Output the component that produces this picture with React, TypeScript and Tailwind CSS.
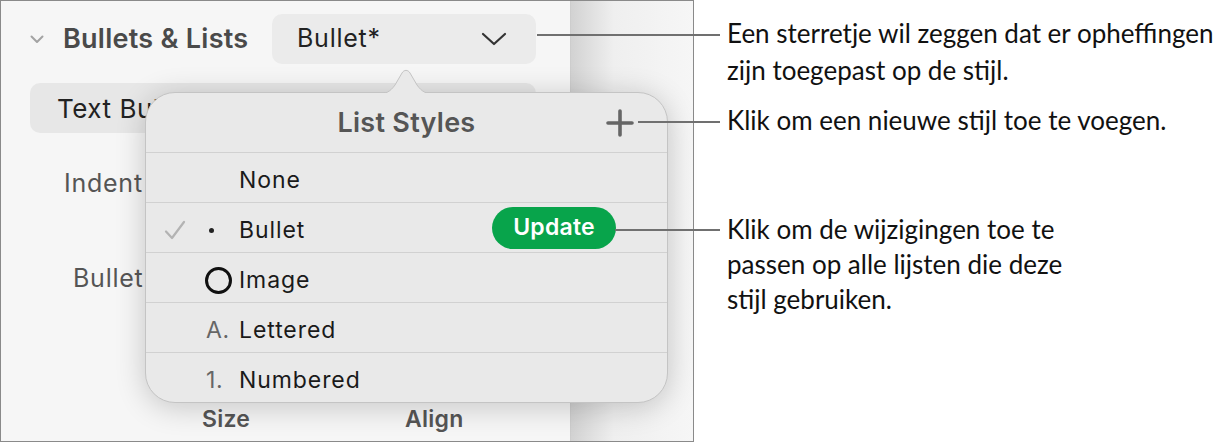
const ui = { fontFamily: 'Inter, "Liberation Sans", sans-serif' };
const note = { fontFamily: 'Lato, "Open Sans", sans-serif' };

const Check = () => (
  <svg width="24" height="24" viewBox="0 0 24 24" className="shrink-0">
    <path d="M3 13.5 L9 20 L21 4" fill="none" stroke="#b3b3b3" strokeWidth="2.2" strokeLinecap="round" strokeLinejoin="round" />
  </svg>
);

const rows = [
  { label: 'None', mark: null, checked: false },
  { label: 'Bullet', mark: 'dot', checked: true },
  { label: 'Image', mark: 'ring', checked: false },
  { label: 'Lettered', mark: 'A.', checked: false },
  { label: 'Numbered', mark: '1.', checked: false },
];

const ListStylesPopover = () => (
  <div className="absolute left-[145px] top-[92px] w-[523px] h-[311px] rounded-[30px] bg-[#e9e9e9] border border-[#c4c4c4] shadow-[0_4px_30px_rgba(0,0,0,0.2)]">
    {/* arrow */}
    <svg width="60" height="26" viewBox="0 0 60 26" className="absolute left-[230px] top-[-25px]">
      <path d="M0 26 C10 26 14 24 19 17 L26 5 C28 1.5 32 1.5 34 5 L41 17 C46 24 50 26 60 26" fill="#e9e9e9" stroke="#c4c4c4" strokeWidth="1" />
      <rect x="0" y="25" width="60" height="2" fill="#e9e9e9" />
    </svg>
    <div className="relative h-[60px] flex items-center justify-center border-b border-[#d1d1d1]">
      <span className="pt-[2px] text-[27px] font-semibold tracking-[0.01em] text-[#555555]">List Styles</span>
      <svg width="28" height="28" viewBox="0 0 28 28" className="absolute left-[460px] top-[16px]">
        <path d="M14 2 V26 M2 14 H26" stroke="#666666" strokeWidth="3.6" strokeLinecap="round" />
      </svg>
    </div>
    {rows.map((r, i) => (
      <div
        key={r.label}
        className={`h-[50px] pt-[5px] flex items-center ${i < rows.length - 1 ? 'border-b border-[#d1d1d1]' : ''}`}
      >
        <div className="w-[58px] pl-[17px] flex items-center">{r.checked && <Check />}</div>
        <div className="w-[35px] flex items-center">
          {r.mark === 'dot' && <span className="ml-[5px] w-[5px] h-[5px] rounded-full bg-[#222222]" />}
          {r.mark === 'ring' && <span className="ml-[1px] w-[27px] h-[27px] rounded-full border-[3.5px] border-[#111111]" />}
          {(r.mark === 'A.' || r.mark === '1.') && (
            <span className="ml-[2px] text-[23px] tracking-[0.03em] text-[#666666]">{r.mark}</span>
          )}
        </div>
        <span className="text-[23px] tracking-[0.04em] text-[#1a1a1a]">{r.label}</span>
        {r.label === 'Bullet' && (
          <button className="ml-auto mr-[51px] -mt-[5px] h-[42px] w-[124px] rounded-full bg-[#08a44b] text-white text-[23px] font-semibold tracking-[0.01em]">
            Update
          </button>
        )}
      </div>
    ))}
  </div>
);

export default function App() {
  return (
    <div className="relative w-[1229px] h-[442px] bg-white flex overflow-hidden" style={ui}>
      <div className="w-[694px] h-[442px] border border-[#8a8a8a] flex shrink-0">
        <div className="w-[570px] h-full bg-[#f6f6f6] border-r border-[#cdcdcd] flex flex-col">
          <div className="mt-[13px] h-[50px] flex items-center pl-[29px]">
            <svg width="14" height="9" viewBox="0 0 14 9">
              <path d="M1.5 1.5 L7 7 L12.5 1.5" fill="none" stroke="#a3a3a3" strokeWidth="2" strokeLinecap="round" strokeLinejoin="round" />
            </svg>
            <span className="ml-[19px] text-[27px] font-semibold tracking-[0.01em] text-[#4a4a4a]">Bullets &amp; Lists</span>
            <div className="ml-auto mr-[34px] w-[264px] h-[50px] rounded-[10px] bg-[#ebebeb] flex items-center pl-[25px] pr-[29px]">
              <span className="text-[25px] tracking-[0.03em] text-[#222222]">Bullet*</span>
              <svg width="26" height="14" viewBox="0 0 26 14" className="ml-auto">
                <path d="M2 2 L13 12 L24 2" fill="none" stroke="#333333" strokeWidth="2.2" strokeLinecap="round" strokeLinejoin="round" />
              </svg>
            </div>
          </div>
          <div className="mt-[19px] ml-[29px] w-[506px] h-[50px] rounded-[10px] bg-[#e7e7e7] flex items-center pl-[27px]">
            <span className="text-[26px] tracking-[0.02em] text-[#222222]">Text Bullets</span>
          </div>
          <div className="mt-[35px] pl-[63px] text-[25px] tracking-[0.03em] leading-[30px] text-[#555555]">Indent</div>
          <div className="mt-[65px] pl-[72px] text-[25px] tracking-[0.03em] leading-[30px] text-[#555555]">Bullet</div>
          <div className="mt-[111px] flex text-[23px] leading-[30px] font-semibold tracking-[0.01em] text-[#555555]">
            <span className="ml-[201px]">Size</span>
            <span className="ml-[155px]">Align</span>
          </div>
        </div>
        <div className="flex-1 h-full bg-[linear-gradient(to_right,#d2d2d2,#efefef_35%,#f6f6f6)]" />
      </div>

      <ListStylesPopover />

      {/* callout lines */}
      <div className="absolute left-[537px] top-[34px] w-[183px] h-[2px] bg-[#707070]" />
      <div className="absolute left-[638px] top-[121px] w-[82px] h-[2px] bg-[#707070]" />
      <div className="absolute left-[615px] top-[229px] w-[105px] h-[2px] bg-[#707070]" />

      <div className="ml-[33px] flex flex-col text-[26px] leading-[37px] text-[#111111]" style={note}>
        <p className="mt-[15px]">
          Een sterretje wil zeggen dat er opheffingen
          <br />
          zijn toegepast op de stijl.
        </p>
        <p className="mt-[13px]">Klik om een nieuwe stijl toe te voegen.</p>
        <p className="mt-[73px] leading-[35px]">
          Klik om de wijzigingen toe te
          <br />
          passen op alle lijsten die deze
          <br />
          stijl gebruiken.
        </p>
      </div>
    </div>
  );
}
